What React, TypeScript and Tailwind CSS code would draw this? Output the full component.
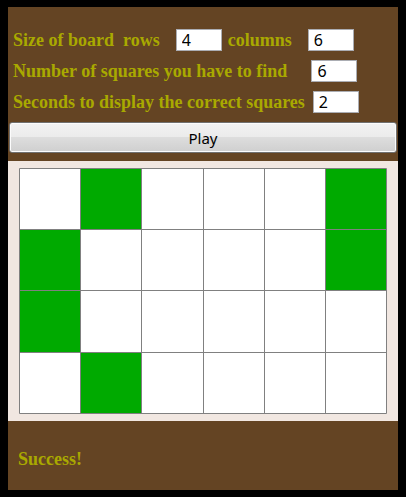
import { useState } from 'react';

const labelText = "whitespace-pre";
const field =
  "h-[22px] w-[46px] shrink-0 rounded-none border border-[#abadb3] bg-white px-[5px] font-['Noto_Sans',sans-serif] text-base leading-5 font-normal text-black outline-none";

const COLUMNS = 6;
const ROWS = 4;
const found = new Set([1, 5, 6, 11, 12, 19]);

export default function App() {
  const [rows, setRows] = useState('4');
  const [columns, setColumns] = useState('6');
  const [squares, setSquares] = useState('6');
  const [seconds, setSeconds] = useState('2');

  return (
    <main className="border-x-8 border-y-[7px] border-black bg-[#644423] font-['Liberation_Serif',serif] text-lg font-bold text-[#a9a900]">
      <form className="pt-[17px] pb-2" onSubmit={(e) => e.preventDefault()}>
        <div className="mb-[5px] pl-[5px]">
          <div className="flex h-[31px] items-center">
            <label htmlFor="rows" className={labelText}>{'Size of board  rows'}</label>
            <input id="rows" className={`${field} ml-4 mr-1.5`} value={rows} onChange={(e) => setRows(e.target.value)} />
            <label htmlFor="columns" className={labelText}>columns</label>
            <input id="columns" className={`${field} ml-4`} value={columns} onChange={(e) => setColumns(e.target.value)} />
          </div>
          <div className="flex h-[31px] items-center">
            <label htmlFor="squares" className={labelText}>Number of squares you have to find</label>
            <input id="squares" className={`${field} ml-6`} value={squares} onChange={(e) => setSquares(e.target.value)} />
          </div>
          <div className="flex h-[31px] items-center">
            <label htmlFor="seconds" className={labelText}>Seconds to display the correct squares</label>
            <input id="seconds" className={`${field} ml-2`} value={seconds} onChange={(e) => setSeconds(e.target.value)} />
          </div>
        </div>
        <div className="px-px">
          <button
            type="submit"
            className="block h-[31px] w-full rounded-[3px] border border-[#707070] bg-[linear-gradient(to_bottom,#f2f2f2,#ebebeb_50%,#dddddd_50%,#cfcfcf)] font-['Noto_Sans',sans-serif] text-[15px] leading-7 font-normal text-black shadow-[inset_0_0_0_1px_#fcfcfc]"
          >
            Play
          </button>
        </div>
      </form>
      <section aria-label="Board" className="bg-[#f1e7e1] px-[11px] py-[7px]">
        <div className="grid grid-cols-6 gap-px rounded-[1px] bg-[#808080] p-px">
          {Array.from({ length: ROWS * COLUMNS }, (_, i) => (
            <button
              key={i}
              type="button"
              aria-label={`Row ${Math.floor(i / COLUMNS) + 1}, column ${(i % COLUMNS) + 1}`}
              className={`aspect-square ${found.has(i) ? 'bg-[#00aa00]' : 'bg-white'}`}
            />
          ))}
        </div>
      </section>
      <p role="status" className="px-2.5 pt-6 pb-[17px]">Success!</p>
    </main>
  );
}
